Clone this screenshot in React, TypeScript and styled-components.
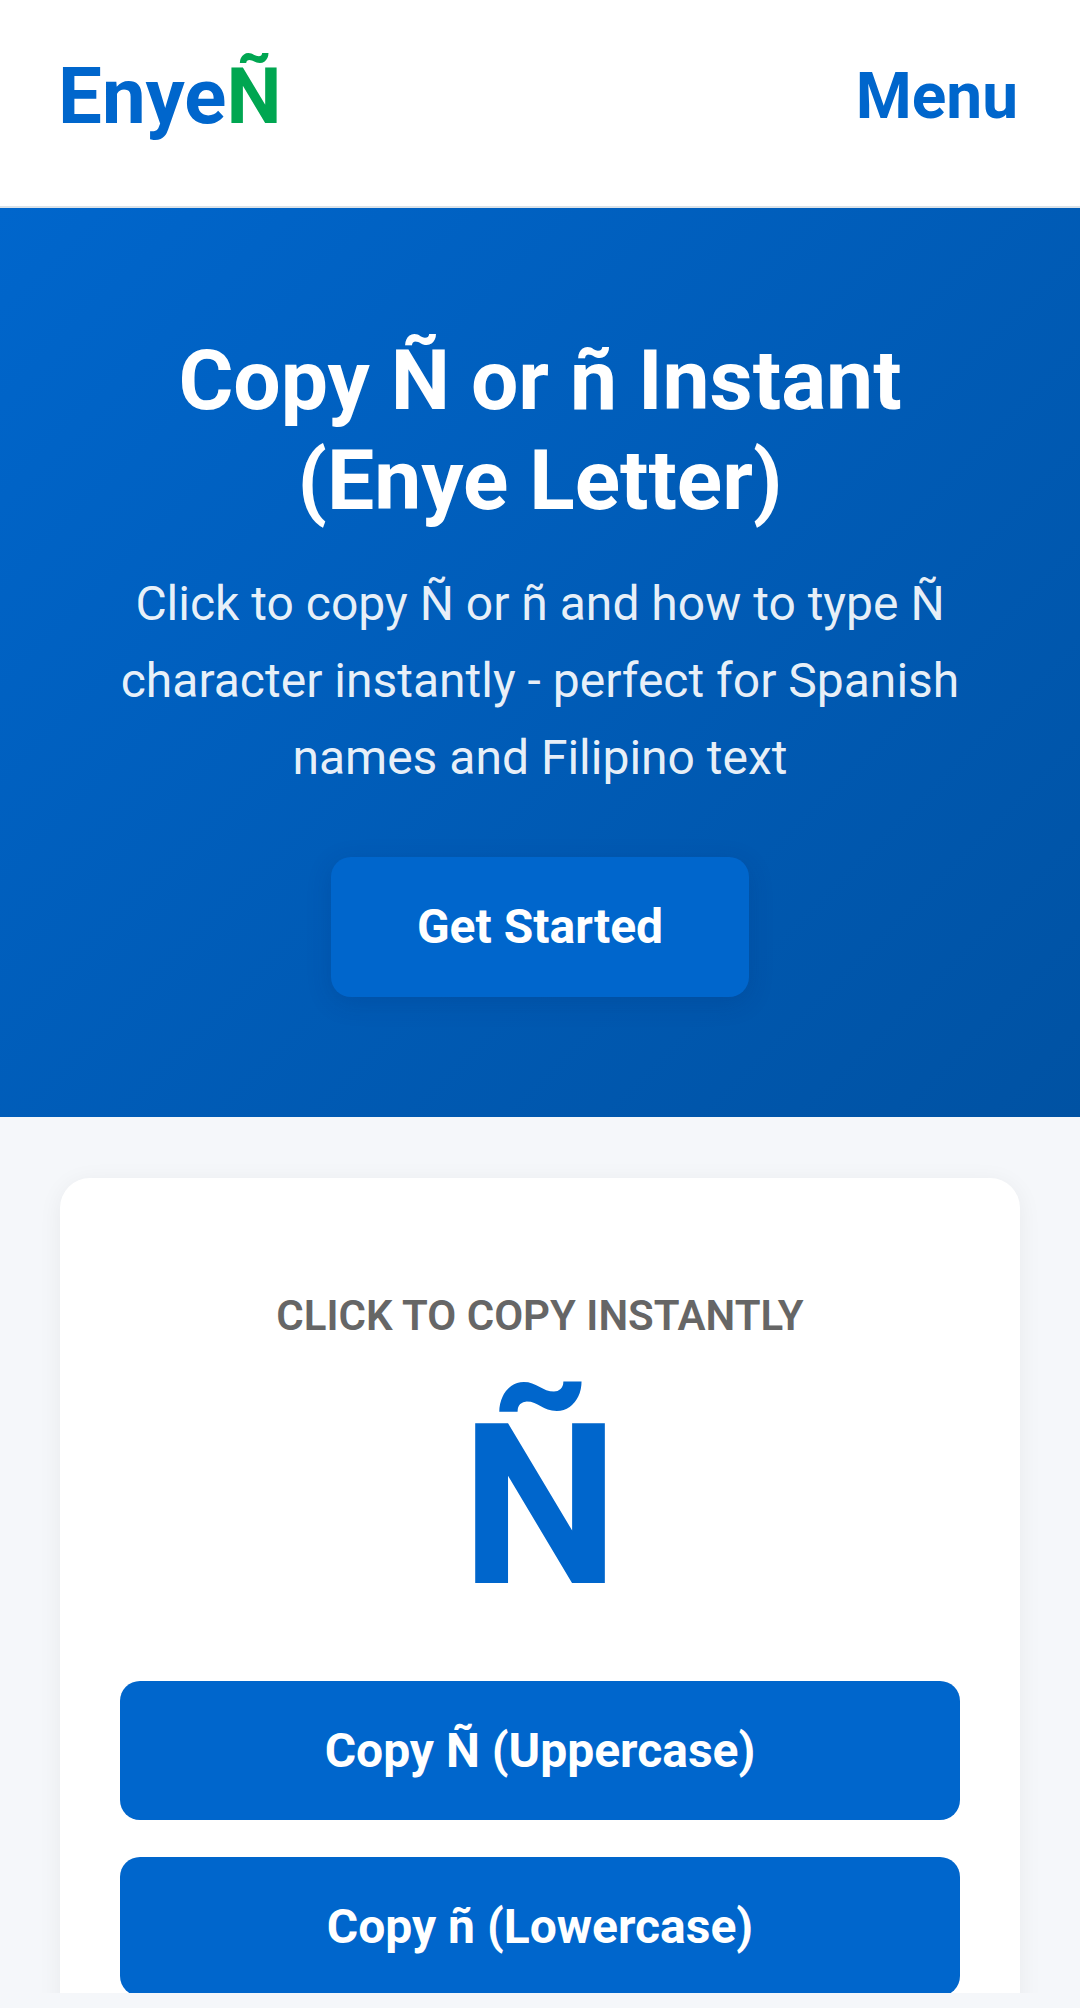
import styled, { createGlobalStyle } from "styled-components";

const GlobalStyle = createGlobalStyle`
  * {
    box-sizing: border-box;
  }
  body {
    margin: 0;
    font-family: Roboto, "Liberation Sans", Arial, sans-serif;
    background-color: #f5f7fa;
  }
`;

const Header = styled.header`
  display: flex;
  justify-content: space-between;
  align-items: center;
  height: 208px;
  padding: 0 62px 13px 58px;
  background-color: #ffffff;
  border-bottom: 2px solid #dbe2e8;
`;

const Logo = styled.div`
  font-size: 78px;
  font-weight: 700;
  color: #0066cc;
  span {
    color: #00a651;
  }
`;

const MenuButton = styled.button`
  font-family: inherit;
  font-size: 64px;
  font-weight: 700;
  color: #0066cc;
  background-color: transparent;
  border: none;
  padding: 0;
`;

const Hero = styled.section`
  display: flex;
  flex-direction: column;
  align-items: center;
  padding: 123px 60px 120px;
  background: linear-gradient(135deg, #0066cc 0%, #0052a3 100%);
  color: #ffffff;
  text-align: center;
`;

const HeroTitle = styled.h1`
  max-width: 880px;
  margin: 0 0 35px;
  font-size: 84px;
  font-weight: 700;
  line-height: 100px;
`;

const HeroText = styled.p`
  max-width: 900px;
  margin: 0 0 61px;
  font-size: 48px;
  line-height: 1.6;
  color: rgba(255, 255, 255, 0.92);
`;

const HeroButton = styled.button`
  font-family: inherit;
  font-size: 48px;
  font-weight: 700;
  line-height: 58px;
  color: #ffffff;
  background-color: #0066cc;
  border: none;
  border-radius: 20px;
  padding: 41px 86px;
  box-shadow: 0 6px 24px rgba(0, 40, 100, 0.18);
`;

const Main = styled.main`
  padding: 61px 60px 60px;
  background-color: #f5f7fa;
`;

const Card = styled.div`
  display: flex;
  flex-direction: column;
  align-items: center;
  padding: 113px 60px 60px;
  background-color: #ffffff;
  border-radius: 30px;
  box-shadow: 0 4px 24px rgba(0, 0, 0, 0.06);
`;

const CardLabel = styled.div`
  font-size: 42px;
  font-weight: 600;
  color: #666666;
  text-transform: uppercase;
`;

const BigLetter = styled.div`
  margin-top: 35px;
  font-size: 224px;
  font-weight: 700;
  color: #0066cc;
`;

const CopyList = styled.div`
  display: flex;
  flex-direction: column;
  gap: 37px;
  width: 100%;
  margin-top: 43px;
`;

const CopyButton = styled.button`
  width: 100%;
  font-family: inherit;
  font-size: 48px;
  font-weight: 700;
  line-height: 59px;
  color: #ffffff;
  background-color: #0066cc;
  border: none;
  border-radius: 20px;
  padding: 40px 20px;
`;

const BottomEdge = styled.div`
  position: fixed;
  left: 0;
  right: 0;
  bottom: 0;
  height: 15px;
  background-color: #f5f7fa;
`;

const copyOptions = ["Copy Ñ (Uppercase)", "Copy ñ (Lowercase)"];

const App = () => {
  return (
    <>
      <GlobalStyle />
      <Header>
        <Logo>
          Enye<span>Ñ</span>
        </Logo>
        <MenuButton>Menu</MenuButton>
      </Header>
      <Hero>
        <HeroTitle>Copy Ñ or ñ Instant (Enye Letter)</HeroTitle>
        <HeroText>
          Click to copy Ñ or ñ and how to type Ñ character instantly - perfect
          for Spanish names and Filipino text
        </HeroText>
        <HeroButton>Get Started</HeroButton>
      </Hero>
      <Main>
        <Card>
          <CardLabel>Click to copy instantly</CardLabel>
          <BigLetter>Ñ</BigLetter>
          <CopyList>
            {copyOptions.map((label) => (
              <CopyButton key={label}>{label}</CopyButton>
            ))}
          </CopyList>
        </Card>
      </Main>
      <BottomEdge />
    </>
  );
};

export default App;
